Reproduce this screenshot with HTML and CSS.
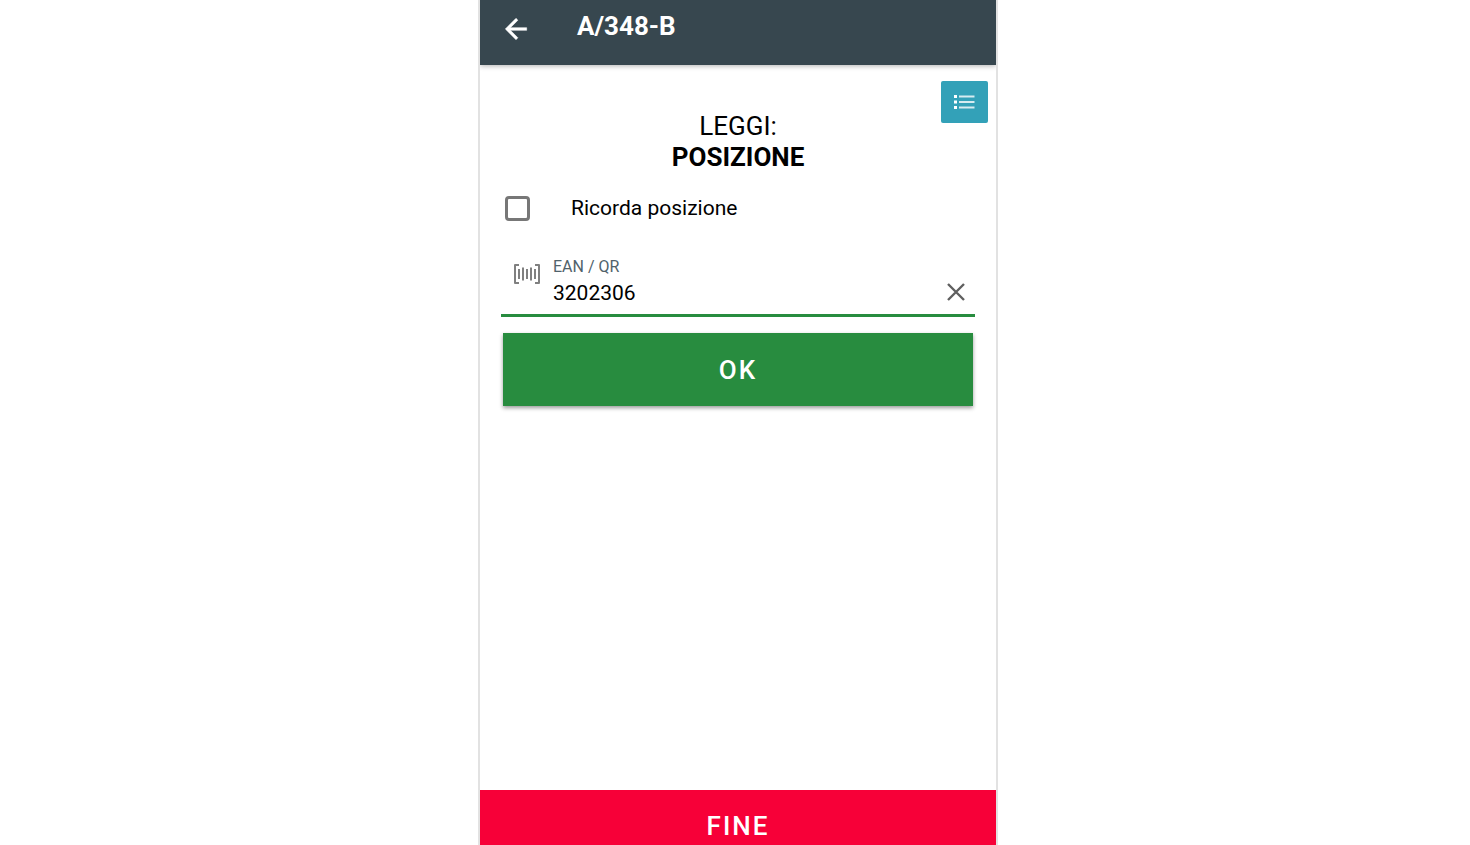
FILE: index.html
```html
<!DOCTYPE html>
<html lang="it">
<head>
    <meta charset="UTF-8">
    <meta name="viewport" content="width=device-width, initial-scale=1.0">
    <title>A/348-B</title>
    <link rel="stylesheet" href="styles.css">
</head>
<body>
    <div class="screen">
        <header class="toolbar">
            <button type="button" class="back" aria-label="Indietro">
                <svg width="32" height="32" viewBox="0 0 24 24" fill="currentColor" stroke="currentColor" stroke-width=".4" stroke-linejoin="round"><path d="M20 11H7.83l5.59-5.59L12 4l-8 8 8 8 1.41-1.41L7.83 13H20v-2z"/></svg>
            </button>
            <h1>A/348-B</h1>
        </header>

        <main class="content">
            <div class="top">
                <h2>LEGGI:<br><b>POSIZIONE</b></h2>
                <button type="button" class="list" aria-label="Elenco">
                    <svg width="24" height="16" viewBox="0 0 24 16" fill="currentColor">
                        <path d="M1 1h3v3H1zM1 6.5h3v3H1zM1 12h3v3H1z"/>
                        <path d="M6 1.5h15.5v2H6zM6 7h15.5v2H6zM6 12.5h15.5v2H6z" opacity=".8"/>
                    </svg>
                </button>
            </div>

            <form class="scan">
                <div class="remember">
                    <input type="checkbox" id="remember">
                    <label for="remember">Ricorda posizione</label>
                </div>

                <div class="field">
                    <svg class="barcode" width="28" height="22" viewBox="0 0 28 22" fill="none" stroke="currentColor" stroke-width="2">
                        <path d="M6 2H2v18h4M22 2h4v18h-4" stroke-linejoin="round"/>
                        <path d="M6 6v10M10 4.500v13M14 6v10M18 4.500v13M22 6v10"/>
                    </svg>
                    <div class="value">
                        <label for="ean">EAN / QR</label>
                        <input type="text" id="ean" value="3202306">
                    </div>
                    <button type="button" class="clear" aria-label="Cancella">
                        <svg width="18" height="18" viewBox="0 0 18 18" fill="none" stroke="currentColor" stroke-width="2.4"><path d="M1 1l16 16M17 1L1 17"/></svg>
                    </button>
                </div>

                <button type="submit" class="ok">OK</button>
            </form>
        </main>

        <button type="button" class="end">FINE</button>
    </div>
</body>
</html>
```

FILE: styles.css
```css
* {
    box-sizing: border-box;
}
body {
    margin: 0;
    padding-left: 6px;
    font-family: Roboto, sans-serif;
    background: white;
    color: #000;
}
button {
    padding: 0;
    border: none;
    background: none;
    color: inherit;
    font-family: inherit;
    cursor: pointer;
}
svg {
    display: block;
}
.screen {
    display: flex;
    flex-direction: column;
    max-width: 520px;
    min-height: 100vh;
    margin: 0 auto;
    border: solid #e2e2e2;
    border-width: 0 2px;
}
.toolbar {
    display: flex;
    align-items: center;
    gap: 45px;
    padding: 7px 20px 20px;
    background: #37474f;
    color: white;
    box-shadow: 0 1px 5px rgba(0, 0, 0, 0.3);
    clip-path: inset(0 0 -8px 0);
}
.back {
    margin-top: 6px;
}
.toolbar h1 {
    margin: 0;
    font-size: 26px;
    line-height: 38px;
    font-weight: 700;
}
.content {
    flex: 1;
    padding: 16px 8px;
}
.top {
    display: grid;
    grid-template-columns: 1fr auto 1fr;
}
.top h2 {
    grid-column: 2;
    margin: 30px 0 0;
    font-size: 26px;
    line-height: 31px;
    font-weight: 400;
    text-align: center;
}
.list {
    display: flex;
    align-items: center;
    justify-content: center;
    justify-self: end;
    width: 47px;
    height: 42px;
    border-radius: 2px;
    background: #33a1b8;
    color: white;
}
.scan {
    padding: 19px 13px;
}
.remember {
    display: flex;
    align-items: center;
    gap: 41px;
    padding-left: 4px;
    font-size: 21px;
    line-height: 32px;
}
.remember input {
    appearance: none;
    width: 25px;
    height: 25px;
    margin: 0;
    border: 3px solid #777;
    border-radius: 4px;
}
.remember input:checked {
    background: #288c3f;
}
.field {
    display: flex;
    align-items: center;
    gap: 12px;
    margin-top: 32px;
    padding: 0 10px 5px 12px;
    border-bottom: 3px solid #288c3f;
}
.barcode {
    align-self: flex-start;
    margin-top: 7px;
    color: #808080;
}
.value {
    flex: 1;
    min-width: 0;
}
.value label {
    display: block;
    font-size: 16px;
    line-height: 21px;
    color: #50626b;
}
.value input {
    display: block;
    width: 100%;
    padding: 0;
    border: none;
    outline: none;
    background: none;
    font-family: inherit;
    font-size: 21px;
    line-height: 32px;
    height: 32px;
}
.clear {
    align-self: flex-end;
    margin-bottom: 8px;
    color: #5f5f5f;
}
.ok, .end {
    display: block;
    font-size: 26px;
    line-height: 32px;
    font-weight: 500;
    letter-spacing: 2px;
    color: white;
}
.ok {
    width: calc(100% - 4px);
    margin: 16px 2px 0;
    padding: 21px 0 20px;
    background: #288c3f;
    box-shadow: 0 2px 4px rgba(0, 0, 0, 0.4);
}
.end {
    padding: 20px 0 3px;
    background: #f70038;
}
```
